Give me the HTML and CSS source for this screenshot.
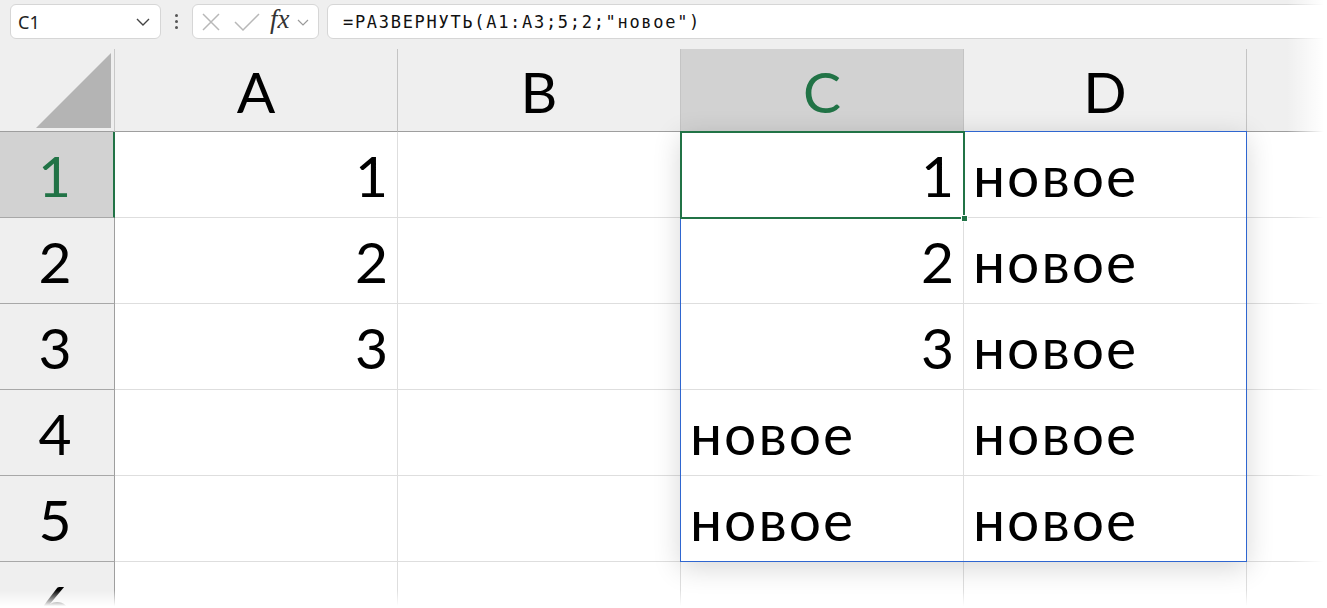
FILE: index.html
```html
<!DOCTYPE html>
<html lang="ru">
<head>
<meta charset="utf-8">
<title>Excel</title>
<link rel="stylesheet" href="styles.css">
</head>
<body>
<div class="app">
  <div class="fbar">
    <div class="namebox">
      <span class="nb-text">C1</span>
      <svg class="nb-chev" width="14" height="8" viewBox="0 0 14 8"><path d="M1 1 L7 7 L13 1" fill="none" stroke="#444" stroke-width="1.4"/></svg>
    </div>
    <div class="dots"><i></i><i></i><i></i></div>
    <div class="fxbox">
      <svg class="ic-x" width="20" height="20" viewBox="0 0 20 20"><path d="M2 2 L18 18 M18 2 L2 18" fill="none" stroke="#b8b8b8" stroke-width="1.5"/></svg>
      <svg class="ic-check" width="26" height="20" viewBox="0 0 26 20"><path d="M1 10 L9 18 L25 2" fill="none" stroke="#b8b8b8" stroke-width="1.5"/></svg>
      <span class="fx">fx</span>
      <svg class="fx-chev" width="12" height="7" viewBox="0 0 12 7"><path d="M1 1 L6 6 L11 1" fill="none" stroke="#9a9a9a" stroke-width="1.2"/></svg>
    </div>
    <div class="formula">=РАЗВЕРНУТЬ(A1:A3;5;2;"новое")</div>
  </div>

  <div class="sheet">
    <div class="grid">
      <div class="corner">
        <svg width="114" height="82" viewBox="0 0 114 82"><polygon points="36,79 111,79 111,4" fill="#b4b4b4"/></svg>
      </div>
      <div class="colh">A</div>
      <div class="colh">B</div>
      <div class="colh colh-sel">C</div>
      <div class="colh">D</div>
      <div class="colh colh-rest"></div>

      <div class="rowh rowh-sel">1</div>
      <div class="cell num">1</div>
      <div class="cell"></div>
      <div class="cell num">1</div>
      <div class="cell txt">новое</div>
      <div class="cell rest"></div>

      <div class="rowh">2</div>
      <div class="cell num">2</div>
      <div class="cell"></div>
      <div class="cell num">2</div>
      <div class="cell txt">новое</div>
      <div class="cell rest"></div>

      <div class="rowh">3</div>
      <div class="cell num">3</div>
      <div class="cell"></div>
      <div class="cell num">3</div>
      <div class="cell txt">новое</div>
      <div class="cell rest"></div>

      <div class="rowh">4</div>
      <div class="cell"></div>
      <div class="cell"></div>
      <div class="cell txt">новое</div>
      <div class="cell txt">новое</div>
      <div class="cell rest"></div>

      <div class="rowh">5</div>
      <div class="cell"></div>
      <div class="cell"></div>
      <div class="cell txt">новое</div>
      <div class="cell txt">новое</div>
      <div class="cell rest"></div>

      <div class="rowh">6</div>
      <div class="cell"></div>
      <div class="cell"></div>
      <div class="cell"></div>
      <div class="cell"></div>
      <div class="cell rest"></div>
    </div>
    <div class="spill"></div>
    <div class="sel"><span class="handle"></span></div>
  </div>

  <div class="fade-r"></div>
  <div class="fade-b"></div>
</div>
</body>
</html>
```

FILE: styles.css
```css
* { box-sizing: border-box; }
html, body { margin: 0; padding: 0; }
body { background: #ffffff; font-family: "Lato", "Noto Sans", sans-serif; }

.app {
  position: relative;
  width: 1327px;
  height: 608px;
  overflow: hidden;
  background: #efefef;
}

/* formula bar */
.fbar {
  height: 49px;
  display: flex;
  align-items: flex-start;
  padding: 4px 0 0 10px;
}
.namebox {
  width: 151px;
  height: 35px;
  background: #fff;
  border: 1px solid #d6d6d6;
  border-radius: 6px;
  display: flex;
  align-items: center;
  justify-content: space-between;
  padding: 0 10px 0 7px;
}
.nb-text {
  font-family: "Noto Sans", "Open Sans", sans-serif;
  font-size: 18px;
  color: #222;
}
.dots {
  width: 31px;
  height: 35px;
  display: flex;
  flex-direction: column;
  align-items: center;
  justify-content: center;
  gap: 3px;
}
.dots i {
  display: block;
  width: 3px;
  height: 3px;
  border-radius: 50%;
  background: #555;
}
.fxbox {
  width: 127px;
  height: 35px;
  background: #fff;
  border: 1px solid #d6d6d6;
  border-radius: 6px;
  display: flex;
  align-items: center;
  padding-left: 8px;
}
.ic-x { margin-right: 13px; }
.ic-check { margin-right: 10px; }
.fx {
  font-family: "Liberation Serif", "DejaVu Serif", serif;
  font-style: italic;
  font-size: 27px;
  color: #333;
  line-height: 1;
  margin-top: -4px;
  margin-right: 7px;
}
.fx-chev { margin-top: 1px; }
.formula {
  flex: 1;
  margin-left: 8px;
  margin-right: -10px;
  height: 35px;
  background: #fff;
  border: 1px solid #d6d6d6;
  border-radius: 6px;
  padding-left: 15px;
  display: flex;
  align-items: center;
  font-family: "DejaVu Sans Mono", monospace;
  font-size: 17px;
  letter-spacing: 1.7px;
  color: #111;
}

/* sheet */
.sheet {
  position: relative;
}
.grid {
  display: grid;
  grid-template-columns: 115px 283px 283px 283px 283px 1fr;
  grid-template-rows: 83px 86px 86px 86px 86px 86px 86px;
  background: #fff;
}
.corner {
  background: #efefef;
  border-right: 1px solid #c8c8c8;
  border-bottom: 1px solid #9e9e9e;
}
.corner svg { display: block; }
.colh {
  background: #efefef;
  border-right: 1px solid #c4c4c4;
  border-bottom: 1px solid #9e9e9e;
  display: flex;
  align-items: flex-end;
  justify-content: center;
  font-size: 57px;
  line-height: 1;
  padding-bottom: 11px;
  color: #000;
}
.colh-sel { background: #d2d2d2; color: #217346; }
.colh-rest { border-right: none; }
.rowh {
  background: #efefef;
  border-right: 1px solid #9e9e9e;
  border-bottom: 1px solid #a8a8a8;
  display: flex;
  align-items: flex-end;
  justify-content: center;
  font-size: 57px;
  line-height: 1;
  padding: 0 4px 13px 0;
  color: #000;
}
.rowh-sel { background: #d2d2d2; color: #217346; border-right: 2px solid #217346; }
.cell {
  border-right: 1px solid #dedede;
  border-bottom: 1px solid #dedede;
  display: flex;
  align-items: flex-end;
  font-size: 57px;
  line-height: 1;
  padding: 0 9px 13px 9px;
  color: #000;
}
.cell.num { justify-content: flex-end; }
.cell.txt { justify-content: flex-start; letter-spacing: 2px; }
.cell.rest { border-right: none; }

/* overlays */
.spill {
  position: absolute;
  left: 680px;
  top: 82px;
  width: 567px;
  height: 431px;
  border: 1px solid #2f66d0;
  box-shadow: 0 6px 26px rgba(0, 0, 0, 0.16);
  pointer-events: none;
}
.sel {
  position: absolute;
  left: 680px;
  top: 82px;
  width: 285px;
  height: 88px;
  border: 2px solid #217346;
  pointer-events: none;
}
.handle {
  position: absolute;
  right: -5px;
  bottom: -5px;
  width: 7px;
  height: 7px;
  background: #217346;
  border: 1px solid #fff;
}

.fade-r {
  position: absolute;
  top: 0;
  right: 0;
  width: 40px;
  height: 608px;
  background: linear-gradient(to right, rgba(255,255,255,0), #ffffff 92%);
  pointer-events: none;
}
.fade-b {
  position: absolute;
  left: 0;
  bottom: 0;
  width: 1327px;
  height: 18px;
  background: linear-gradient(to bottom, rgba(255,255,255,0), #ffffff 90%);
  pointer-events: none;
}
```
